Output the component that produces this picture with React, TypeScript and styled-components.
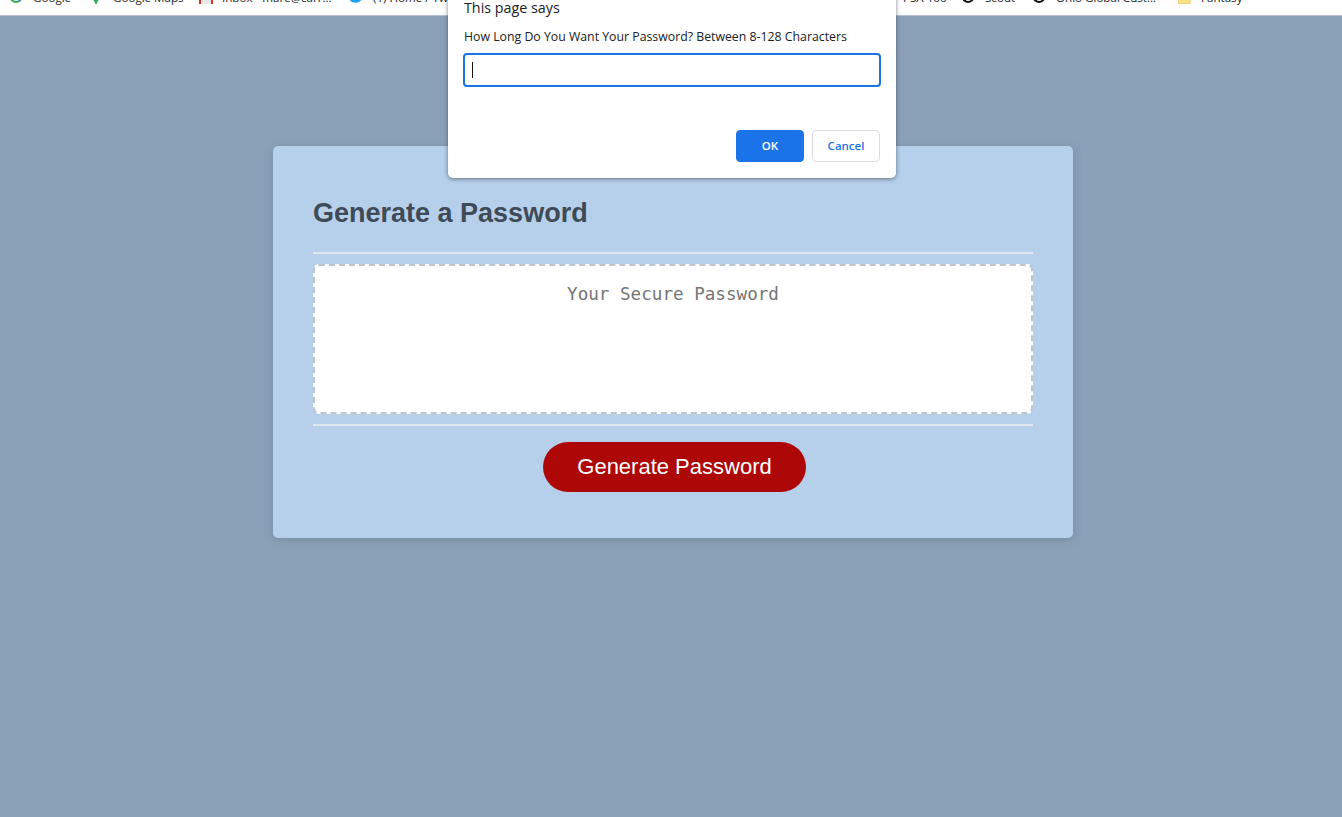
import React from 'react'
import styled, { createGlobalStyle } from 'styled-components'

const GlobalStyle = createGlobalStyle`
  html, body {
    margin: 0;
    padding: 0;
    height: 100%;
    overflow: hidden;
    background: #8aa1b8;
    font-family: "Liberation Sans", Arial, sans-serif;
  }
`

const Page = styled.div`
  width: 1342px;
  height: 817px;
  display: flex;
  flex-direction: column;
  overflow: hidden;
  position: relative;
`

const BookmarkBar = styled.div`
  height: 15px;
  flex: none;
  background: #fff;
  border-bottom: 1px solid #b9c0c8;
  box-sizing: content-box;
  margin-bottom: -1px;
  overflow: hidden;
  display: flex;
  align-items: flex-end;
  padding-left: 10px;
`

const Bookmark = styled.div<{ $width: number }>`
  width: ${p => p.$width}px;
  flex: none;
  display: flex;
  align-items: center;
  gap: 7px;
  height: 16px;
  margin-bottom: 10px;
  font-family: "Open Sans", "Noto Sans", sans-serif;
  font-size: 11.6px;
  color: #222;
  white-space: nowrap;
  svg { flex: none; }
`

const Main = styled.main`
  flex: 1;
  display: flex;
  justify-content: center;
  align-items: flex-start;
  padding: 131px 0 0 4px;
`

const Card = styled.section`
  width: 800px;
  height: 392px;
  box-sizing: border-box;
  background: #b6cfeb;
  border-radius: 5px;
  padding: 0 40px;
  box-shadow: 0 2px 8px rgba(60, 80, 100, 0.25);
`

const CardHeader = styled.header`
  height: 108px;
  box-sizing: border-box;
  padding-top: 51px;
  border-bottom: 2px solid #e1e6ea;
`

const Title = styled.h2`
  margin: 0;
  font-size: 27px;
  line-height: 33px;
  font-weight: 700;
  color: #3e4a56;
`

const CardBody = styled.div`
  padding: 10px 0;
`

const PasswordBox = styled.div`
  height: 150px;
  box-sizing: border-box;
  background: #fff;
  border: 2px dashed #c0c5cb;
  border-radius: 6px;
  padding-top: 18px;
  text-align: center;
  font-family: "DejaVu Sans Mono", "Liberation Mono", monospace;
  font-size: 17.6px;
  line-height: 20px;
  color: #757575;
`

const CardFooter = styled.footer`
  border-top: 2px solid #e1e6ea;
  display: flex;
  justify-content: center;
  padding-top: 16px;
`

const GenerateButton = styled.button`
  width: 263px;
  height: 50px;
  border: 0;
  border-radius: 25px;
  background: #ae0707;
  color: #fff;
  font-family: "Liberation Sans", Arial, sans-serif;
  font-size: 22px;
  margin-left: 3px;
  padding: 0;
`

const Dialog = styled.div`
  position: absolute;
  left: 448px;
  top: -10px;
  width: 448px;
  height: 188px;
  box-sizing: border-box;
  background: #fff;
  border-radius: 0 0 5px 5px;
  box-shadow: 0 1px 4px rgba(40, 50, 60, 0.6);
  padding: 0 16px;
  font-family: "Open Sans", "Noto Sans", sans-serif;
  color: #202124;
`

const DialogTitle = styled.div`
  margin-top: 8px;
  font-size: 14.3px;
  line-height: 19px;
`

const DialogMessage = styled.div`
  margin-top: 12px;
  font-size: 12.3px;
  line-height: 16px;
`

const PromptInput = styled.div`
  margin: 8px -1px 0 -1px;
  height: 34px;
  box-sizing: border-box;
  border: 2px solid #1a73e8;
  border-radius: 4px;
  display: flex;
  align-items: center;
  padding-left: 7px;
`

const Caret = styled.span`
  width: 1px;
  height: 16px;
  background: #111;
`

const DialogActions = styled.div`
  margin-top: 43px;
  display: flex;
  justify-content: flex-end;
  gap: 8px;
`

const DialogButton = styled.button<{ $primary?: boolean }>`
  width: 68px;
  height: 32px;
  box-sizing: border-box;
  border-radius: 4px;
  border: 1px solid ${p => (p.$primary ? '#1a73e8' : '#dadce0')};
  background: ${p => (p.$primary ? '#1a73e8' : '#fff')};
  color: ${p => (p.$primary ? '#fff' : '#1a73e8')};
  font-family: "Open Sans", "Noto Sans", sans-serif;
  font-size: 11.5px;
  font-weight: 600;
  padding: 0 0 2px;
`

const RingIcon = ({ color, accent }: { color: string; accent?: string }) => (
  <svg width="16" height="14" viewBox="0 0 16 14">
    <circle cx="6" cy="7" r="5" fill="none" stroke={color} strokeWidth="2.2" />
    {accent && <path d="M11 7a5 5 0 0 1-2 4" fill="none" stroke={accent} strokeWidth="2.2" />}
  </svg>
)

const bookmarks: { label: string; width: number; icon: React.ReactNode }[] = [
  { label: 'Google', width: 80, icon: <RingIcon color="#34a853" accent="#4285f4" /> },
  {
    label: 'Google Maps',
    width: 109,
    icon: <svg width="16" height="14" viewBox="0 0 16 14"><path d="M6 15 2 7h8z" fill="#34a853" /></svg>,
  },
  {
    label: 'Inbox - mare@carr...',
    width: 151,
    icon: <svg width="16" height="14" viewBox="0 0 16 14"><rect width="14" height="14" fill="#e8e8e8" /><path d="M0 0h2v14H0zM12 0h2v14h-2z" fill="#d93025" /></svg>,
  },
  {
    label: '(1) Home / Twi',
    width: 545,
    icon: <svg width="16" height="14" viewBox="0 0 16 14"><path d="M0 10.5c3 3 9 3.5 12-1.5V6H3z" fill="#1da1f2" /></svg>,
  },
  { label: 'PSA 100', width: 67, icon: <svg width="1" height="14" viewBox="0 0 1 14" /> },
  { label: 'Scout', width: 71, icon: <RingIcon color="#111" /> },
  { label: 'Ohio Global Cust...', width: 145, icon: <RingIcon color="#111" /> },
  {
    label: 'Fantasy',
    width: 80,
    icon: <svg width="16" height="14" viewBox="0 0 16 14"><path d="M0 0h12v14H0z" fill="#fbe08a" stroke="#e8c860" strokeWidth="1" /></svg>,
  },
]

export default function App() {
  return (
    <Page>
      <GlobalStyle />
      <BookmarkBar>
        {bookmarks.map(b => (
          <Bookmark key={b.label} $width={b.width}>
            {b.icon}
            {b.label}
          </Bookmark>
        ))}
      </BookmarkBar>
      <Main>
        <Card>
          <CardHeader>
            <Title>Generate a Password</Title>
          </CardHeader>
          <CardBody>
            <PasswordBox>Your Secure Password</PasswordBox>
          </CardBody>
          <CardFooter>
            <GenerateButton>Generate Password</GenerateButton>
          </CardFooter>
        </Card>
      </Main>
      <Dialog>
        <DialogTitle>This page says</DialogTitle>
        <DialogMessage>How Long Do You Want Your Password? Between 8-128 Characters</DialogMessage>
        <PromptInput><Caret /></PromptInput>
        <DialogActions>
          <DialogButton $primary>OK</DialogButton>
          <DialogButton>Cancel</DialogButton>
        </DialogActions>
      </Dialog>
    </Page>
  )
}
